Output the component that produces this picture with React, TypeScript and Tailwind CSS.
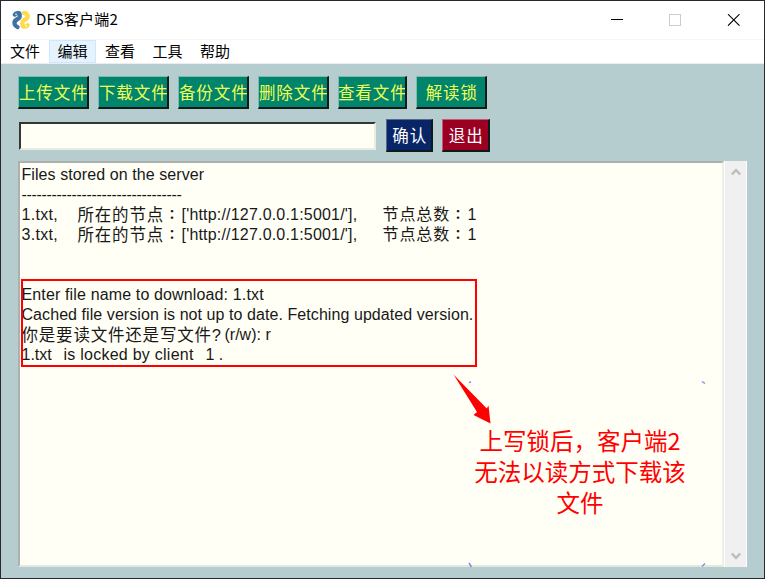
import type { ReactNode } from "react";

const sans = "font-['Liberation_Sans','Noto_Sans_CJK_SC',sans-serif]";
const cjk = "font-['Noto_Sans_CJK_SC',sans-serif]";

function PythonLogo() {
  return (
    <svg className="ml-[10px] h-5 w-5 shrink-0" viewBox="0 0 20 20">
      <g strokeLinecap="round" strokeLinejoin="round" fill="none">
        <path d="M3.800 4.600C4.800 2.600 8.400 2.400 8.700 4.600C9 7.500 8.500 8 6.500 9C3.500 10.500 3 12 3.600 14C4 15.500 5 16.500 6.500 17" stroke="#3b73a3" strokeWidth="4.300" />
        <path d="M13 3C15.500 3.200 17 4.500 16.700 6.500C16.400 9 14.500 9.500 12.800 10.500C11 11.600 11 13.500 11.500 15.300C12 17.200 15.500 17.200 16.600 15.200" stroke="#ffda4f" strokeWidth="4.300" />
      </g>
      <circle cx="5" cy="4.200" r=".8" fill="#fff" />
      <circle cx="15" cy="16" r=".8" fill="#fff" />
    </svg>
  );
}

function TitleBar() {
  return (
    <header className="flex h-[38px] shrink-0 items-center bg-white">
      <PythonLogo />
      <span className={`${cjk} mb-[2px] ml-[5px] text-[15px] leading-5 tracking-[0.200px] text-black`}>DFS客户端2</span>
      <svg className="ml-auto mr-[24px] h-3 w-[130px]" viewBox="0 0 130 12" fill="none">
        <path d="M1 5.500h12" stroke="#000" />
        <rect x="59.500" y=".5" width="11" height="11" stroke="#ccc" />
        <path d="M118 .2l11.500 11.500M129.500.2L118 11.700" stroke="#000" strokeWidth="1.100" />
      </svg>
    </header>
  );
}

function MenuBar() {
  return (
    <nav className={`${cjk} flex h-[25px] shrink-0 border-t border-[#f5f5f5] border-b border-b-[#ededed] bg-white text-[15px] leading-[21px] text-black`}>
      <span className="w-[48px] text-center">文件</span>
      <span className="w-[47px] border border-[#cce8ff] bg-[#e5f3ff] text-center leading-[19px]">编辑</span>
      <span className="w-[48px] text-center">查看</span>
      <span className="w-[47px] text-center">工具</span>
      <span className="w-[48px] text-center">帮助</span>
    </nav>
  );
}

function Button({ className, children }: { className: string; children: ReactNode }) {
  return (
    <button
      className={`${cjk} flex h-[33px] shrink-0 items-center justify-center overflow-hidden whitespace-nowrap border border-b-2 border-r-2 border-b-[#101a18] border-r-[#101a18] pl-[1.500px] pt-px text-[16.500px] leading-none tracking-[0.900px] ${className}`}
    >
      {children}
    </button>
  );
}

function Toolbar() {
  const green = "bg-[#00846b] text-[#f2ff55] border-l-[#7fb9b0] border-t-[#7fb9b0]";
  return (
    <div className="flex">
      <Button className={`w-[71px] ${green}`}>上传文件</Button>
      <Button className={`ml-[9px] w-[71px] ${green}`}>下载文件</Button>
      <Button className={`ml-[9px] w-[71px] ${green}`}>备份文件</Button>
      <Button className={`ml-[9px] w-[71px] ${green}`}>删除文件</Button>
      <Button className={`ml-[9px] w-[69px] ${green}`}>查看文件</Button>
      <Button className={`ml-[9px] w-[71px] ${green}`}>解读锁</Button>
    </div>
  );
}

function Chevron({ up }: { up?: boolean }) {
  return (
    <svg className={`h-[8px] w-[10px] ${up ? "" : "rotate-180"}`} viewBox="0 0 10 8" fill="none">
      <path d="M.8 6.500L5 2.200l4.200 4.300" stroke="#bcbcbc" strokeWidth="2.400" />
    </svg>
  );
}

function Line({ children = null }: { children?: ReactNode }) {
  return <div className="flex h-5 whitespace-pre">{children}</div>;
}

function Colon() {
  return <span className="w-[16px] text-center font-['Noto_Sans_CJK_TC',sans-serif] text-[13px] font-bold leading-[18px] tracking-normal">：</span>;
}

function FileLine({ name }: { name: string }) {
  return (
    <Line>
      <span className="w-[56px] tracking-[0.300px]">{name},</span>
      <span className="flex w-[104px] text-[16.500px] tracking-[0.800px]">所在的节点<Colon /></span>
      <span className="w-[201px] tracking-[0.190px]">['http://127.0.0.1:5001/'],</span>
      <span className="flex w-[85px] text-[16px] tracking-[0.900px]">节点总数<Colon /></span>
      <span>1</span>
    </Line>
  );
}

function Annotation() {
  return (
    <>
      <div className="absolute left-[20px] top-[278px] h-[88px] w-[456px] border-2 border-[#f00]" />
      <svg className="absolute left-[449px] top-[369px] h-[60px] w-[44px]" viewBox="450 370 44 60">
        <path d="M453.500 374.500L486.800 408.500 488.500 405.500 490.500 423.500 473.500 415 477 412Z" fill="#f00" />
      </svg>
      <svg className="absolute left-[467px] top-[379px] h-[188px] w-[240px]" viewBox="468 380 240 188" fill="none" stroke="#7893e5" strokeWidth="1.500">
        <path d="M469 383l2-1.500M702 381.500l3 2M469 563l2.500 4M702 566.500l3-3" />
      </svg>
      <div className={`${cjk} absolute left-[469px] top-[424px] w-[220px] text-center text-[23.500px] leading-[31px] text-[#f00]`}>
        <div>上写锁后，客户端2</div>
        <div>无法以读方式下载该</div>
        <div>文件</div>
      </div>
    </>
  );
}

export default function App() {
  return (
    <div className="relative flex h-[579px] w-[765px] flex-col overflow-hidden border border-[#29282b] bg-[#b5cdcf]">
      <TitleBar />
      <MenuBar />
      <main className="flex flex-1 flex-col px-[17px] pt-[12px]">
        <Toolbar />
        <div className="mt-[10px] flex">
          <input
            aria-label="文件名"
            className="ml-px mt-[3px] h-[28px] w-[357px] border-2 border-b-[#e9ece3] border-l-[#343633] border-r-[#e9ece3] border-t-[#343633] bg-[#fffff6] outline-none"
          />
          <Button className="ml-[10px] w-[47px] border-l-[#56688c] border-t-[#56688c] bg-[#082567] text-white">确认</Button>
          <Button className="ml-[9px] w-[48px] border-l-[#c45a72] border-t-[#c45a72] bg-[#9b0022] text-white">退出</Button>
        </div>
        <section className="mt-[9px] flex h-[406px] w-[729px]">
          <div
            className={`${sans} w-[706px] border-2 border-b-[#e2e8df] border-l-[#adb1ae] border-r-[#edeee8] border-t-[#adb1ae] bg-[#fffff6] pl-[1.500px] pt-[2px] text-[16px] leading-5 text-[#181818]`}
          >
            <Line><span className="tracking-[0.080px]">Files stored on the server</span></Line>
            <Line><span className="tracking-[-0.330px]">--------------------------------</span></Line>
            <FileLine name="1.txt" />
            <FileLine name="3.txt" />
            <Line />
            <Line />
            <Line><span className="tracking-[0.140px]">Enter file name to download: 1.txt</span></Line>
            <Line><span className="tracking-[0.070px]">Cached file version is not up to date. Fetching updated version.</span></Line>
            <Line><span className="w-[203px] text-[16.500px] tracking-[0.800px]">你是要读文件还是写文件?</span><span>(r/w): r</span></Line>
            <Line>
              <span className="w-[42px]">1.txt  </span>
              <span className="w-[142px] tracking-[0.250px]">is locked by client  </span>
              <span>1 .</span>
            </Line>
          </div>
          <div className="flex w-[23px] flex-col items-center justify-between border-x border-white bg-[#f0f0f0] py-[7px]">
            <Chevron up />
            <Chevron />
          </div>
        </section>
      </main>
      <Annotation />
    </div>
  );
}
